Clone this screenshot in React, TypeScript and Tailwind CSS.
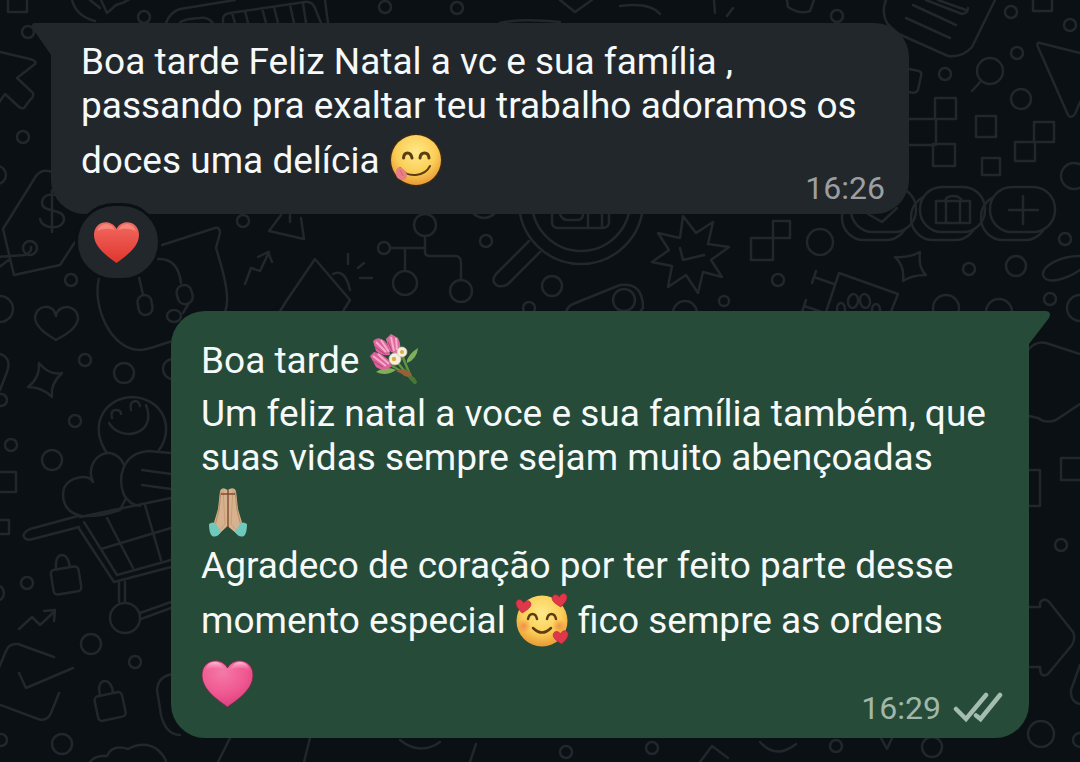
import type { ReactNode } from 'react';

interface EmojiProps {
  label: string;
  children: ReactNode;
}

interface BubbleProps {
  side: 'in' | 'out';
  time: string;
  children: ReactNode;
}

type Dot = [number, number, number];

const DOTS: Dot[] = [
  [144, 17, 6], [28, 32, 6], [23, 137, 6], [-3, 175, 9], [30, 248, 7], [71, 280, 6], [243, 221, 6],
  [425, 225, 11], [384, 248, 6], [405, 283, 12], [461, 291, 11], [486, 241, 6], [581, 202, 62],
  [581, 202, 49], [552, 286, 10], [529, 308, 6], [624, 300, 11], [820, 242, 13], [778, 280, 6],
  [724, 301, 5], [685, 313, 12], [969, 269, 6], [1016, 266, 10], [1065, 239, 6], [1050, 299, 6],
  [946, 308, 13], [999, 312, 13], [1080, 308, 13], [1011, 12, 6], [1070, 25, 6], [1017, 53, 6],
  [945, 74, 6], [990, 71, 13], [1021, 99, 10], [1074, 176, 13], [837, 16, 6], [385, 7, 6],
  [457, 8, 6], [0, 309, 13], [85, 360, 6], [124, 373, 10], [173, 369, 10], [75, 421, 6],
  [11, 445, 6], [52, 460, 10], [1, 400, 6], [125, 618, 15], [27, 583, 6], [-4, 593, 8],
  [91, 644, 10], [135, 662, 6], [1, 740, 6], [62, 744, 10], [1041, 734, 13], [1080, 740, 7],
  [932, 747, 10], [1061, 545, 6], [836, 746, 6], [566, 752, 6], [652, 748, 6],
];

const BOXES: [number, number, number, number][] = [
  [8, -10, 19, 22], [1033, -8, 19, 19], [935, 98, 21, 21], [933, 144, 22, 22], [976, 116, 20, 21],
  [982, 158, 18, 17], [1034, 122, 20, 20], [1015, 142, 20, 19], [773, 221, 17, 17],
  [751, 238, 22, 22], [-5, 472, 21, 20], [-5, 520, 14, 14], [1061, 458, 22, 22], [1020, 470, 20, 36],
];

const DOODLES = [
  // speech mark, keyboard
  'M72 0Q76 16 95 21M90 0L100 8M101 0L107 13L116 5Q125 3 131-2',
  'M166 23Q170 12 180 9L235 0M180 23Q182 19 200 18Q208 17 213 23M223 23V18Q224 14 230 13L305 2Q312 1 315 8L321 23M232 13L235 23M245 11L248 23M262 8L266 23M274 7L278 23M290 5L294 23M303 3L306 23M325 0L328 23',
  // pointer, price tag
  'M0 52L30 59Q37 61 35 64L17 78L33 93Q34 97 30 100L24 108Q21 109 18 106L5 94L-2 104',
  'M52 172Q42 168 36 176L3 229L14 275L60 265L75 242M-2 257L25 255Q32 252 31 247M-2 268L10 259',
  'M62 201C60 192 42 192 42 203C42 213 64 208 64 219C64 230 42 230 40 219M52 190V232',
  // funnel, trend, megaphone
  'M281 215L269 231L304 239L301 218M290 222V215M245 284L251 268L260 271L269 252M258 257L268 252L272 262',
  'M287 300L315 259L350 300L340 316M287 300L277 316M333 274Q345 268 350 290M348 254V264M358 268L364 263M360 278H372',
  // bag and stethoscope
  'M162 245L215 228Q220 227 220 233L216 248C226 280 230 300 225 312M99 278C92 305 110 350 140 350C155 349 165 341 180 340',
  'M158 259Q178 258 181 283M139 277L143 295M189 303L183 313',
  // node tree
  'M391 248H425M425 236V252Q425 256 430 256H455Q461 256 461 263V280M405 248V271M474 214Q484 222 494 214',
  // magnifier
  'M529 241L496 274Q490 282 498 286Q504 287 508 284L540 252M552 214V222Q552 228 558 228H602Q609 228 609 222V214M588 214V228M602 214V228M560 214Q562 220 568 220H577Q583 220 583 214',
  'M566 312Q568 306 573 304L620 285Q643 282 643 308L640 312',
  // burst
  'M683 216L696 233L713 222L708 244L729 247L711 260L722 277L703 272L698 293L686 275L668 287L672 266L652 262L669 250L658 233L680 238ZM680 248L683 260L704 255',
  // sparkles
  'M895 257Q909 258 920 252Q918 268 926 275Q912 275 903 281Q905 266 895 257Z',
  'M39 363Q50 376 62 373Q50 384 52 397Q42 387 28 387Q40 378 39 363Z',
  'M1080 256C1060 256 1042 266 1043 275C1046 285 1065 280 1080 270',
  // paw sign
  'M826 312L839 273L898 294L890 314M812 283L816 271M814 277L834 284M802 312L806 300M804 306L822 312',
  // card, lens, kite
  'M886 0Q881 12 887 23Q895 32 901 35L948 56Q962 58 972 47L995 0M913 5L956 25M906 18L950 38M926 0L962 14Q968 13 968 8M938 0L966 10',
  'M981 81L972 91M1080 53L1040 43Q1036 42 1038 47L1068 115Q1071 119 1075 114L1080 102M909 119H936V145H909',
  'M909 69L919 71Q922 72 921 76L918 90Q916 94 909 92M787 0L788 7Q800 15 810 11L814 0M714 0L715 13M733 8L727 16',
  'M500 23Q520 18 560 22M560 0L575 12L592 0M620 6Q650 2 660 14',
  // briefcase, plus and heart inside the pills
  'M936 201H970V223H936ZM946 201V223M960 201V223M945 201Q946 196 953 196Q960 196 962 201M1009 210H1038M1023 196V224M868 214L882 222L897 208',
  // heart, exclamation
  'M56 316C58 303 78 304 78 319C76 330 64 335 56 340C48 335 36 328 35 318C36 304 54 303 56 316ZM0 354Q12 358 7 372L0 390',
  // smiley holding a heart
  'M107 453C88 426 104 398 132 397C163 398 175 428 159 450M109 423C120 442 158 436 146 405M112 418Q110 410 116 410Q121 410 121 414M131 410Q129 402 135 401Q139 401 140 406',
  'M93 482C86 466 98 452 110 453Q120 455 124 465M93 482C88 474 70 476 64 488C60 505 70 514 82 516Q100 517 120 510L126 498',
  'M171 453L148 451C120 454 118 480 124 495Q130 505 140 506M142 470L171 474M142 485L171 489',
  // cart
  'M78 516L30 529Q22 533 24 537Q26 541 33 539L79 527M80 517L171 498M78 527L114 582L171 567M84 522L117 575L171 560M107 518L133 568M145 505L161 560M101 549L171 528M119 583V602M125 582V602M140 613L171 602M141 619L171 608',
  'M56 570L56 563Q57 555 62 555Q68 555 70 567M100 696L99 688Q100 681 105 681Q111 681 113 692',
  'M19 629L32 617L40 625L55 611M44 611L55 610L54 621',
  'M-2 670L6 651Q9 643 18 644L54 657M19 673L26 688L73 668M59 693L51 713Q47 722 38 719L-2 704',
  'M90 762Q95 755 107 756Q112 744 128 749Q145 740 158 750Q166 758 166 762M173 674Q158 676 157 690L161 715Q166 735 180 735M218 762L230 738',
  // right edge
  'M1029 349Q1036 341 1046 343L1080 354M1029 416L1038 418Q1046 424 1056 420L1080 404M1029 607H1040V603Q1044 596 1050 603L1073 632Q1076 638 1072 645L1048 674Q1040 679 1040 667H1029',
  'M1080 665L1071 690Q1070 702 1080 704M881 738L887 749L892 738M310 738L304 762M400 740Q420 756 440 742M470 762L476 744M700 762L712 746L728 758M760 742Q776 760 796 744',
];

const PILLS = [851, 920, 990];

function Wallpaper() {
  return (
    <svg
      aria-hidden="true"
      className="absolute inset-0 h-full w-full"
      viewBox="0 0 1080 762"
      preserveAspectRatio="xMinYMin slice"
      fill="none"
      stroke="#21272b"
      strokeWidth="2.5"
      strokeLinecap="round"
      strokeLinejoin="round"
    >
      {PILLS.map((x) => (
        <g key={x}>
          <rect x={x - 9} y="195" width="66" height="45" rx="22" />
          <rect x={x} y="187" width="65" height="45" rx="22" fill="#0a1014" />
        </g>
      ))}
      {DOODLES.map((d, index) => (
        <path key={index} d={d} />
      ))}
      {DOTS.map(([cx, cy, r], index) => (
        <circle key={index} cx={cx} cy={cy} r={r} />
      ))}
      {BOXES.map(([x, y, width, height], index) => (
        <rect key={index} x={x} y={y} width={width} height={height} />
      ))}
      <rect x="52" y="568" width="28" height="25" rx="4" transform="rotate(-9 66 580)" />
      <rect x="96" y="694" width="28" height="25" rx="4" transform="rotate(-12 110 706)" />
      <rect x="138" y="295" width="14" height="20" rx="7" transform="rotate(-10 145 305)" />
      <rect x="177" y="285" width="15" height="19" rx="7" transform="rotate(-15 185 294)" />
      <ellipse cx="174" cy="316" rx="7" ry="6" />
      <ellipse cx="853" cy="301" rx="5" ry="7" transform="rotate(10 853 301)" />
      <ellipse cx="865" cy="301" rx="5" ry="7" transform="rotate(-10 865 301)" />
      <ellipse cx="841" cy="309" rx="4" ry="6" />
      <ellipse cx="876" cy="310" rx="4" ry="6" />
    </svg>
  );
}

/* Emoji sit inline and open the line up to 64px */
function Emoji({ label, children }: EmojiProps) {
  return (
    <svg
      role="img"
      aria-label={label}
      viewBox="0 0 54 64"
      className="inline-block h-16 w-[54px] align-[-19px]"
    >
      {children}
    </svg>
  );
}

function FaceGradient({ id }: { id: string }) {
  return (
    <radialGradient id={id} cx="0.5" cy="0.35" r="0.65">
      <stop offset="0" stopColor="#ffe98a" />
      <stop offset="0.6" stopColor="#fbcf58" />
      <stop offset="1" stopColor="#e89a35" />
    </radialGradient>
  );
}

const YummyFace = () => (
  <Emoji label="😋">
    <defs><FaceGradient id="face-yum" /></defs>
    <circle cx="27" cy="32" r="26.5" fill="#3a2a17" />
    <circle cx="27" cy="32" r="25" fill="url(#face-yum)" />
    <g fill="none" stroke="#5c3d12" strokeLinecap="round">
      <path d="M14.5 30Q15 25 18.500 25T23 30" strokeWidth="3" />
      <path d="M31 30Q31.500 25 35.500 25T40 30" strokeWidth="3" />
      <path d="M11 40Q17 48 27 47Q37 46 41 38" strokeWidth="2" />
    </g>
    <path d="M10 39Q15 40 18 46Q18 52 13 52Q7 51 7 46Q6 41 10 39Z" fill="#e87f84" />
    <path d="M11 42L14 48" stroke="#cf646b" strokeWidth="1" />
  </Emoji>
);

const MINI_HEART = 'M0 6C-4 3-7.500 0-7.500-3.500C-7-8-2-8 0-4C2-8 7-8 7.500-3.500C7.500 0 4 3 0 6Z';

const LovedFace = () => (
  <Emoji label="🥰">
    <defs>
      <FaceGradient id="face-love" />
      <radialGradient id="cheek">
        <stop offset="0" stopColor="#f28a45" stopOpacity="0.9" />
        <stop offset="1" stopColor="#f28a45" stopOpacity="0" />
      </radialGradient>
    </defs>
    <circle cx="27" cy="33" r="25.500" fill="url(#face-love)" />
    <circle cx="9" cy="38" r="7" fill="url(#cheek)" />
    <circle cx="44" cy="38" r="7" fill="url(#cheek)" />
    <g fill="none" stroke="#5c3d12" strokeLinecap="round">
      <path d="M13 31Q14 26 17.500 26T22 31" strokeWidth="2.500" />
      <path d="M32 31Q33 26 36.500 26T41 31" strokeWidth="2.500" />
      <path d="M18 40Q27 49 36 40" strokeWidth="2.500" />
    </g>
    <g fill="#e1374a" stroke="#a82638" strokeWidth="0.6">
      <path d={MINI_HEART} transform="translate(8 19) rotate(8)" />
      <path d={MINI_HEART} transform="translate(45 13) rotate(-8)" />
      <path d={MINI_HEART} transform="translate(46 50) rotate(-6)" />
    </g>
  </Emoji>
);

const Bouquet = () => (
  <Emoji label="💐">
    <g fill="none" strokeLinecap="round" strokeWidth="2.500">
      <path d="M20 36L45 51M28 34L43 52M33 27L43 52" stroke="#639241" />
      <path d="M37 43Q40 48 46 54" stroke="#477833" strokeWidth="4" />
    </g>
    <path d="M7 44Q17 37 27 42Q17 49 7 44ZM38 32Q41 25 49 20Q48 31 38 35Z" fill="#81ae5b" />
    <path d="M27 43Q34 39 42 45L43 48Q36 50 33 46Z" fill="#976037" />
    <path d="M4 13Q8 9 12 11Q20 13 21 27Q12 28 7 23Z" fill="#d9679b" />
    <path d="M17 11L22 6L29 10Q33 18 30 24Q24 27 20 22Z" fill="#de6d9f" />
    <path d="M1 28L5 24Q12 25 16 29Q22 33 22 39Q14 44 7 39Z" fill="#dd629a" />
    <path d="M7 14L17 24M12 12L20 24M22 9L25 23M27 10L28 22M4 28L17 38M9 26L20 36" stroke="#f8aaca" strokeWidth="2" />
    <path d="M6 19L16 26M19 14L23 23M4 33L14 39" stroke="#b83e76" strokeWidth="1" />
    <circle cx="26" cy="31" r="6" fill="#f7efe0" stroke="#cfc29f" strokeWidth="0.7" />
    <circle cx="33" cy="24" r="5" fill="#f7efe0" stroke="#cfc29f" strokeWidth="0.7" />
    <circle cx="25" cy="31" r="2.200" fill="#dbb044" />
    <circle cx="33" cy="24" r="2" fill="#dbb044" />
  </Emoji>
);

const PrayingHands = () => (
  <Emoji label="🙏🏼">
    <path d="M26.500 10Q21 6 19 11L17 29L12 46L18 54L26.500 46L36 54L42 46L37 29L35 11Q33 6 26.500 10Z" fill="#d6b28e" />
    <path d="M20 11L18 30L14 46M34 11L36 30L40 46" fill="none" stroke="#bd936e" strokeWidth="1.200" />
    <path d="M22 9L24 44L18 51M32 9L30 44L36 51" fill="none" stroke="#c99f78" strokeWidth="1" />
    <path d="M27 9V47M20 14H34" stroke="#814a32" strokeWidth="1.400" />
    <path d="M8 44Q12 41 15 44L20 52Q16 58 11 56Q8 53 8 44Z" fill="#6fc9bc" />
    <path d="M46 44Q42 41 39 44L34 52Q38 58 43 56Q46 53 46 44Z" fill="#6fc9bc" />
  </Emoji>
);

const PinkHeart = () => (
  <Emoji label="🩷">
    <defs>
      <radialGradient id="pink" cx="0.4" cy="0.25" r="0.8">
        <stop offset="0" stopColor="#f47aa6" />
        <stop offset="0.6" stopColor="#ef5790" />
        <stop offset="1" stopColor="#d93c7a" />
      </radialGradient>
      <linearGradient id="pink-shine" x2="0" y2="1">
        <stop offset="0" stopColor="#ffc0da" />
        <stop offset="1" stopColor="#f47aa6" stopOpacity="0" />
      </linearGradient>
    </defs>
    <path d="M26.500 55C17 48 1 38 1 23C1 7 20 4 26.500 16C33 4 52 7 52 23C52 38 36 48 26.500 55Z" fill="url(#pink)" stroke="#702b49" strokeWidth="0.8" />
    <path d="M4 19Q6 10 14 10Q21 10 24 18Q14 13 4 19ZM29 18Q32 10 39 10Q47 10 49 19Q39 13 29 18Z" fill="url(#pink-shine)" />
  </Emoji>
);

const RedHeart = () => (
  <svg role="img" aria-label="❤️" viewBox="0 0 48 44" className="h-11 w-12">
    <defs>
      <linearGradient id="red" x2="0" y2="1">
        <stop offset="0" stopColor="#f26a5f" />
        <stop offset="1" stopColor="#e0352f" />
      </linearGradient>
    </defs>
    <path d="M22.500 43C13 36 0 27 0 15C0 1 17-2 22.500 9C28-2 45 1 45 15C45 27 32 36 22.500 43Z" fill="url(#red)" />
    <path d="M3 11Q6 4 12 4Q18 4 21 10Q12 7 3 11ZM24 10Q27 4 33 4Q39 4 42 11Q33 7 24 10Z" fill="#fb9d91" opacity="0.6" />
  </svg>
);

function SentTicks() {
  return (
    <svg
      role="img"
      aria-label="Entregue"
      viewBox="0 0 50 32"
      className="h-8 w-[50px]"
      fill="none"
      stroke="#a5bdb0"
      strokeWidth="4.500"
      strokeLinecap="round"
    >
      <path d="M3 17L13 27L33 3M23 23.500L27.500 27L47 3" />
    </svg>
  );
}

function Bubble({ side, time, children }: BubbleProps) {
  const out = side === 'out';

  return (
    <article
      className={`relative flex w-full max-w-[858px] flex-col pl-[30px] pt-[17px] ${
        out
          ? 'self-end rounded-[34px] rounded-tr-none bg-[#264b39] pb-3.5 pr-[26px]'
          : 'rounded-[34px] rounded-tl-none bg-[#22272b] pb-2.5 pr-6'
      }`}
    >
      {out ? (
        <svg aria-hidden="true" viewBox="0 0 22 34" className="absolute left-full top-0 -ml-px h-[34px] w-[22px]">
          <path d="M0 0H18Q24 1 21 7L1 33H0Z" fill="#264b39" />
        </svg>
      ) : (
        <svg aria-hidden="true" viewBox="0 0 22 34" className="absolute right-full top-0 -mr-px h-[34px] w-[22px]">
          <path d="M22 0H4Q0 1 3 6L21 32H22Z" fill="#22272b" />
        </svg>
      )}
      <p className="text-[37px] leading-[44px] text-[#f5f9fa]">{children}</p>
      <div
        className={`flex items-center gap-3 self-end text-[32px] leading-8 ${
          out ? '-mt-6 text-[#a0b8ab]' : '-mt-5 text-[#9b9fa2]'
        }`}
      >
        <time>{time}</time>
        {out && <SentTicks />}
      </div>
    </article>
  );
}

export default function App() {
  return (
    <main className="relative min-h-screen overflow-hidden bg-[#0a1014] font-[Roboto,'Liberation_Sans',sans-serif]">
      <Wallpaper />

      <div className="relative flex flex-col px-[51px] pb-6 pt-[23px]">
        <Bubble side="in" time="16:26">
          Boa tarde Feliz Natal a vc e sua família ,<br />
          passando pra exaltar teu trabalho adoramos os<br />
          doces uma delícia <YummyFace />
        </Bubble>

        {/* Reaction */}
        <button
          type="button"
          className="relative -mt-[11px] mb-[30px] ml-6 flex h-[78px] w-[86px] items-center justify-center rounded-full border-3 border-[#0a1014] bg-[#22272b]"
        >
          <RedHeart />
        </button>

        <Bubble side="out" time="16:29">
          Boa tarde <Bouquet /><br />
          Um feliz natal a voce e sua família também, que<br />
          suas vidas sempre sejam muito abençoadas<br />
          <PrayingHands /><br />
          Agradeco de coração por ter feito parte desse<br />
          momento especial <LovedFace /> fico sempre as ordens<br />
          <PinkHeart />
        </Bubble>
      </div>
    </main>
  );
}
